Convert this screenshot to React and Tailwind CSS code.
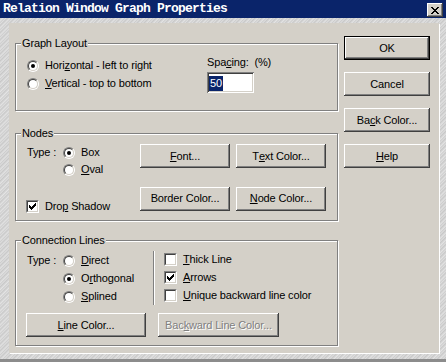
import React from "react";

const U = ({ children }) => (
  <span className="underline underline-offset-[1px] decoration-[1px]">{children}</span>
);

function Btn({ children, className = "", def = false, disabled = false }) {
  return (
    <div
      className={`flex items-center justify-center bg-[#d4d0c8] h-[24px] leading-[13px] ${
        def
          ? "border border-black shadow-[inset_-1px_-1px_#404040,inset_1px_1px_#ffffff,inset_-2px_-2px_#808080,inset_2px_2px_#d4d0c8]"
          : "shadow-[inset_-1px_-1px_#404040,inset_1px_1px_#ffffff,inset_-2px_-2px_#808080,inset_2px_2px_#d4d0c8]"
      } ${disabled ? "text-[#808080] [text-shadow:1px_1px_#ffffff]" : "text-black"} ${className}`}
    >
      {children}
    </div>
  );
}

function RadioDot({ checked }) {
  return (
    <div className="w-[12px] h-[12px] rounded-full border border-t-[#808080] border-l-[#808080] border-b-white border-r-white shrink-0">
      <div className="w-[10px] h-[10px] rounded-full border border-t-[#404040] border-l-[#404040] border-b-[#d4d0c8] border-r-[#d4d0c8] bg-white flex items-center justify-center">
        {checked && <div className="w-[4px] h-[4px] rounded-full bg-black" />}
      </div>
    </div>
  );
}

function Radio({ checked, children, h = "h-[18px]" }) {
  return (
    <div className={`flex items-start ${h}`}>
      <div className="mt-[3px]">
        <RadioDot checked={checked} />
      </div>
      <span className="ml-[6px] mt-[2px] leading-[13px] whitespace-nowrap">{children}</span>
    </div>
  );
}

function CheckBox({ checked }) {
  return (
    <div className="w-[13px] h-[13px] border border-t-[#808080] border-l-[#808080] border-b-white border-r-white shrink-0">
      <div className="w-[11px] h-[11px] border border-t-[#404040] border-l-[#404040] border-b-[#d4d0c8] border-r-[#d4d0c8] bg-white flex items-center justify-center">
        {checked && (
          <svg width="7" height="7" viewBox="0 0 7 7" shapeRendering="crispEdges">
            <path
              d="M6 0h1v3h-1v1h-1v1h-1v1h-1v1h-1v-1h-1v-1h-1v-3h1v1h1v1h1v-1h1v-1h1z"
              fill="#000"
            />
          </svg>
        )}
      </div>
    </div>
  );
}

function Check({ checked, children, className = "" }) {
  return (
    <div className={`flex items-start h-[18px] ${className}`}>
      <CheckBox checked={checked} />
      <span className="ml-[6px] leading-[13px] whitespace-nowrap">{children}</span>
    </div>
  );
}

function Group({ label, className = "", children }) {
  return (
    <div
      className={`relative border border-[#808080] shadow-[inset_1px_1px_#ffffff,1px_1px_#ffffff] ${className}`}
    >
      <span className="absolute -top-[7px] left-[5px] px-[1px] bg-[#d4d0c8] leading-[13px] whitespace-nowrap">
        {label}
      </span>
      {children}
    </div>
  );
}

export default function App() {
  return (
    <div className="w-[446px] h-[362px] overflow-hidden flex flex-col bg-[repeating-linear-gradient(135deg,#e4e4e4_0px,#cdcdcd_1px,#dedede_2px,#c8c8c8_3px,#e2e2e2_5px)] font-['Liberation_Sans',Arial,sans-serif] text-[11px] tracking-[-0.15px] text-black select-none">
      {/* Title bar */}
      <div className="h-[18px] shrink-0 bg-[#0a246a] flex items-start pl-[3px] pr-[3px]">
        <span className="mt-[2px] text-white font-bold font-['Liberation_Mono',monospace] text-[13px] leading-[14px] tracking-[-0.8px] whitespace-nowrap">
          Relation Window Graph Properties
        </span>
        <div className="ml-auto mt-[3px] w-[16px] h-[14px] bg-[#d4d0c8] shadow-[inset_-1px_-1px_#404040,inset_1px_1px_#ffffff,inset_-2px_-2px_#808080,inset_2px_2px_#d4d0c8] flex items-center justify-center">
          <svg width="8" height="7" viewBox="0 0 8 7" shapeRendering="crispEdges">
            <path
              d="M0 0h2v1h1v1h2v-1h1v-1h2v1h-1v1h-1v1h-1v1h1v1h1v1h1v1h-2v-1h-1v-1h-2v1h-1v1h-2v-1h1v-1h1v-1h1v-1h-1v-1h-1v-1h-1z"
              fill="#000"
            />
          </svg>
        </div>
      </div>

      {/* Frame */}
      <div className="flex-1 pl-[9px] pt-[5px]">
        <div className="w-[430px] h-[330px] bg-[#d4d0c8] shadow-[1px_1px_#ffffff] flex items-start pl-[6px] pt-[13px] gap-[6px]">
          {/* Left column */}
          <div className="w-[323px] mt-[7px] flex flex-col">
            {/* Graph Layout */}
            <Group label="Graph Layout" className="h-[68px]">
              <div className="flex pl-[11px]">
                <div className="w-[180px] pt-[13px] flex flex-col">
                  <Radio checked>
                    Hori<U>z</U>ontal - left to right
                  </Radio>
                  <Radio>
                    <U>V</U>ertical - top to bottom
                  </Radio>
                </div>
                <div className="pt-[12px] flex flex-col">
                  <span className="leading-[13px] whitespace-nowrap">
                    Spa<U>c</U>ing:&nbsp; (%)
                  </span>
                  <div className="mt-[3px] w-[47px] h-[21px] bg-white shadow-[inset_1px_1px_#808080,inset_-1px_-1px_#ffffff,inset_2px_2px_#404040,inset_-2px_-2px_#d4d0c8] pl-[2px] pt-[3px]">
                    <span className="inline-block bg-[#0a246a] text-white leading-[15px] h-[15px] pl-[1px] pr-[1px]">
                      50
                    </span>
                  </div>
                </div>
              </div>
            </Group>

            {/* Nodes */}
            <Group label="Nodes" className="h-[88px] mt-[22px]">
              <div className="flex pl-[11px] pt-[10px]">
                <div className="w-[113px] flex flex-col">
                  <div className="flex items-start">
                    <span className="w-[36px] mt-[2px] leading-[13px] whitespace-nowrap">Type :</span>
                    <div className="flex flex-col">
                      <Radio checked h="h-[17px]">
                        Box
                      </Radio>
                      <Radio h="h-[17px]">
                        <U>O</U>val
                      </Radio>
                    </div>
                  </div>
                  <Check checked className="mt-[22px] -ml-[1px]">
                    Dro<U>p</U> Shadow
                  </Check>
                </div>
                <div className="grid grid-cols-[90px_90px] gap-x-[6px] gap-y-[11px]">
                  <Btn>
                    <U>F</U>ont...
                  </Btn>
                  <Btn>
                    T<U>e</U>xt Color...
                  </Btn>
                  <Btn>Border Color...</Btn>
                  <Btn>
                    <U>N</U>ode Color...
                  </Btn>
                </div>
              </div>
            </Group>

            {/* Connection Lines */}
            <Group label="Connection Lines" className="h-[106px] mt-[19px]">
              <div className="flex flex-col pl-[11px] pt-[11px]">
                <div className="flex items-start">
                  <div className="w-[126px] flex items-start">
                    <span className="w-[36px] mt-[2px] leading-[13px] whitespace-nowrap">Type :</span>
                    <div className="flex flex-col">
                      <Radio>
                        <U>D</U>irect
                      </Radio>
                      <Radio checked>
                        O<U>r</U>thogonal
                      </Radio>
                      <Radio>
                        <U>S</U>plined
                      </Radio>
                    </div>
                  </div>
                  <div className="w-[1px] h-[54px] -mt-[1px] bg-[#808080] shadow-[1px_0_#ffffff]" />
                  <div className="flex flex-col ml-[10px] mt-[1px]">
                    <Check>
                      <U>T</U>hick Line
                    </Check>
                    <Check checked>
                      <U>A</U>rrows
                    </Check>
                    <Check>
                      <U>U</U>nique backward line color
                    </Check>
                  </div>
                </div>
                <div className="flex mt-[6px] -ml-[1px] gap-[12px]">
                  <Btn className="w-[120px]">
                    <U>L</U>ine Color...
                  </Btn>
                  <Btn className="w-[121px]" disabled>
                    Bac<U>k</U>ward Line Color...
                  </Btn>
                </div>
              </div>
            </Group>
          </div>

          {/* Right column buttons */}
          <div className="w-[86px] flex flex-col gap-[12px]">
            <Btn def>OK</Btn>
            <Btn>Cancel</Btn>
            <Btn>
              Ba<U>c</U>k Color...
            </Btn>
            <Btn>
              <U>H</U>elp
            </Btn>
          </div>
        </div>
      </div>
      <div className="h-[3px] shrink-0 bg-[#8c8c8c]" />
    </div>
  );
}
